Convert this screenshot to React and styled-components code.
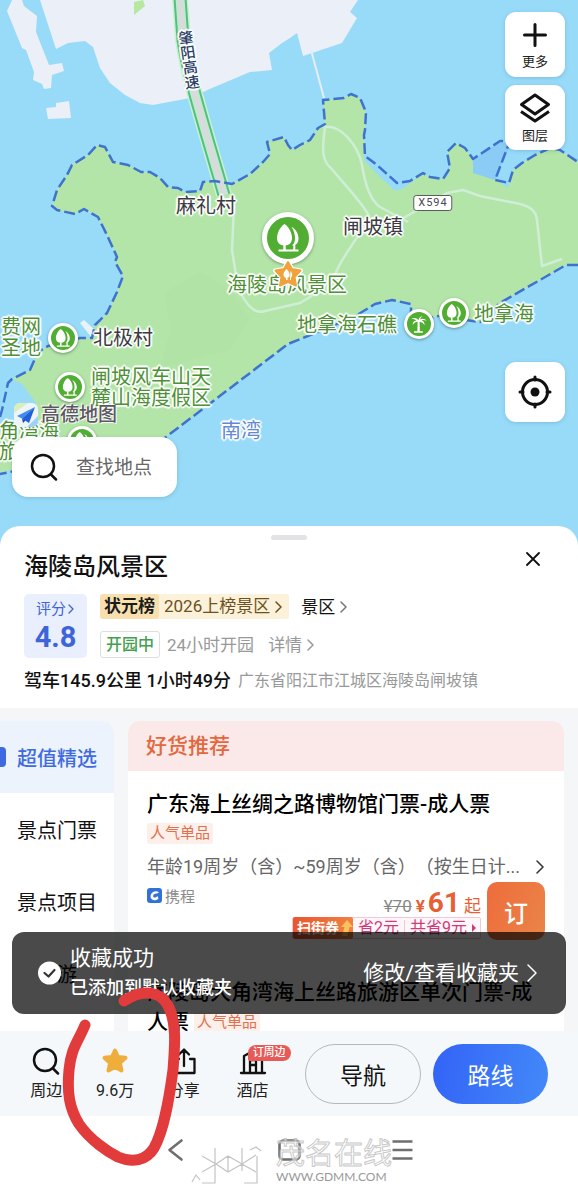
import React from "react";
import styled, { createGlobalStyle, css } from "styled-components";

const GlobalStyle = createGlobalStyle`
  * { box-sizing: border-box; }
  body {
    margin: 0;
    background: #fff;
    font-family: Roboto, "Noto Sans CJK SC", sans-serif;
    text-spacing-trim: space-all;
    color: #111;
  }
  button, input { font: inherit; color: inherit; border: 0; padding: 0; background: none; }
  h1, h2, h3, p { margin: 0; font-weight: 400; }
  a { color: inherit; text-decoration: none; }
  svg { display: block; flex: none; }
`;

const Page = styled.div`
  position: relative;
  display: flex;
  flex-direction: column;
  width: 100%;
  overflow: hidden;
`;

/* ---------- map ---------- */

const MapArea = styled.section`
  position: relative;
  height: 546px;
  background: #97dbf9;
  overflow: hidden;
`;

const MapSvg = styled.svg`
  width: 100%;
  height: 100%;
`;

const place = css`
  position: absolute;
  left: ${(p) => (p.$x / 578) * 100}%;
  top: ${(p) => p.$y}px;
  transform: translate(-50%, -50%);
`;

const MapLabel = styled.span`
  ${place}
  font-size: 20px;
  line-height: 21px;
  white-space: pre;
  color: ${(p) => p.$color || "#3c3a42"};
  text-shadow: -2px 0 1px #fff, 2px 0 1px #fff, 0 -2px 1px #fff, 0 2px 1px #fff,
    1px 1px 1px #fff, -1px -1px 1px #fff, 1px -1px 1px #fff, -1px 1px 1px #fff;
`;

const RoadName = styled(MapLabel)`
  writing-mode: vertical-rl;
  font-size: 15px;
  font-weight: 500;
  color: #2c3f66;
  transform: translate(-50%, -50%) rotate(-8deg);
`;

const RoadShield = styled.span`
  ${place}
  padding: 0 4px;
  border: 1px solid #5d5a62;
  border-radius: 3px;
  background: #fff;
  font-size: 11px;
  line-height: 14px;
  letter-spacing: 1px;
  color: #4a4a50;
`;

const Pin = styled.span`
  ${place}
  display: flex;
  align-items: center;
  justify-content: center;
  width: ${(p) => p.$d || 30}px;
  height: ${(p) => p.$d || 30}px;
  border: ${(p) => (p.$d ? 5 : 3)}px solid #fff;
  border-radius: 50%;
  background: #52ad33;
  box-shadow: 0 1px 3px rgba(40, 70, 40, 0.5);
`;

const StarPin = styled.span`
  ${place}
`;

const Brand = styled.div`
  position: absolute;
  left: 14px;
  top: 403px;
  display: flex;
  align-items: center;
  gap: 3px;
  font-size: 19px;
  line-height: 24px;
  font-weight: 500;
  color: #5b5660;
  text-shadow: 0 0 1px #fff, 1px 1px 1px #fff, -1px -1px 1px #fff;
`;

const MapTools = styled.div`
  position: absolute;
  top: 12px;
  right: 13px;
  display: flex;
  flex-direction: column;
  gap: 8px;
`;

const ToolButton = styled.button`
  display: flex;
  flex-direction: column;
  align-items: center;
  justify-content: center;
  gap: 4px;
  width: 60px;
  height: ${(p) => (p.$square ? 60 : 65)}px;
  margin-top: ${(p) => (p.$square ? 204 : 0)}px;
  padding-top: ${(p) => (p.$square ? 0 : 2)}px;
  border-radius: 11px;
  background: #fff;
  box-shadow: 0 1px 4px rgba(0, 60, 100, 0.18);
  font-size: 13px;
  line-height: 18px;
  color: #222;
`;

const SearchBox = styled.label`
  position: absolute;
  left: 12px;
  top: 437px;
  display: flex;
  align-items: center;
  gap: 18px;
  width: 165px;
  height: 60px;
  padding-left: 18px;
  border-radius: 16px;
  background: #fff;
  box-shadow: 0 1px 4px rgba(0, 60, 100, 0.18);

  input {
    width: 90px;
    font-size: 19px;
    outline: none;
  }
  input::placeholder { color: #666; opacity: 1; }
`;

/* ---------- place sheet ---------- */

const Sheet = styled.section`
  position: relative;
  display: flex;
  flex-direction: column;
  margin-top: -20px;
  padding: 9px 24px 14px;
  border-radius: 20px 20px 0 0;
  background: #fff;
`;

const Handle = styled.span`
  align-self: center;
  width: 36px;
  height: 5px;
  border-radius: 3px;
  background: #e3e3e5;
`;

const TitleRow = styled.div`
  display: flex;
  justify-content: space-between;
  margin-top: 12px;

  h1 { font-size: 24px; line-height: 30px; font-weight: 500; }
`;

const CloseButton = styled.button`
  display: flex;
  align-items: center;
  justify-content: center;
  width: 30px;
  height: 14px;
  margin-right: 6px;
`;

const Facts = styled.div`
  display: flex;
  gap: 13px;
  margin-top: 12px;
`;

const Score = styled.a`
  display: flex;
  flex-direction: column;
  align-items: center;
  width: 63px;
  height: 64px;
  padding-top: 5px;
  border-radius: 5px;
  background: #e9effc;
  color: #3f63d8;
  font-size: 15px;
  line-height: 20px;

  strong { font-size: 29px; line-height: 37px; font-weight: 700; }
`;

const Inline = styled.span`
  display: flex;
  align-items: center;
  gap: ${(p) => p.$gap || 0}px;
`;

const FactRows = styled.div`
  display: flex;
  flex-direction: column;
  justify-content: space-between;
`;

const FactRow = styled.div`
  display: flex;
  align-items: center;
  gap: ${(p) => p.$gap}px;
  font-size: 17px;
  line-height: 24px;
`;

const RankLink = styled.a`
  display: flex;
  align-items: center;
  padding-right: 6px;
  border-radius: 3px;
  background: #fcf1d9;
  color: #6c5223;
  font-size: 17px;
  line-height: 25px;
  gap: 5px;

  b {
    padding: 0 4px;
    border-radius: 3px;
    background: #f7e0ae;
    color: #1b1b1b;
    font-size: 17px;
    font-weight: 700;
  }
`;

const OpenTag = styled.span`
  padding: 0 5px;
  border: 1px solid #dcdfdc;
  border-radius: 3px;
  color: #43a04f;
  font-size: 16px;
  line-height: 25px;
  font-weight: 500;
`;

const Hours = styled.span`
  display: flex;
  align-items: center;
  gap: 14px;
  color: #999;
`;

const TripRow = styled.p`
  display: flex;
  align-items: center;
  gap: 7px;
  margin-top: 10px;
  line-height: 26px;
  white-space: nowrap;
  font-size: 16px;
  color: #999;

  strong { font-size: 18px; font-weight: 500; color: #111; }
`;

/* ---------- offers ---------- */

const Offers = styled.section`
  display: flex;
  align-items: stretch;
  gap: 14px;
  padding: 13px 14px 0 0;
  background: #f5f6f7;
`;

const SideNav = styled.nav`
  display: flex;
  flex-direction: column;
  flex: none;
  width: 114px;
  border-radius: 0 12px 0 0;
  background: #fff;
  overflow: hidden;
`;

const SideLink = styled.a`
  position: relative;
  display: flex;
  align-items: center;
  justify-content: center;
  height: 72px;
  padding-left: ${(p) => (p.$indent ? 20 : 0)}px;
  background: ${(p) => (p.$active ? "#edf3fd" : "transparent")};
  color: ${(p) => (p.$active ? "#3f6be0" : "#111")};
  font-size: 20px;
  font-weight: ${(p) => (p.$active ? 500 : 400)};

  &::before {
    content: "";
    display: ${(p) => (p.$active ? "block" : "none")};
    position: absolute;
    left: 0;
    width: 6px;
    height: 20px;
    border-radius: 0 4px 4px 0;
    background: #3f69e0;
  }
`;

const Card = styled.div`
  flex: 1;
  min-width: 0;
  border-radius: 12px 12px 0 0;
  background: #fff;
  overflow: hidden;
`;

const CardHead = styled.h2`
  padding-left: 18px;
  background: #fbe8e8;
  color: #e2683f;
  font-size: 21px;
  line-height: 50px;
  font-weight: 500;
`;

const Offer = styled.article`
  padding: ${(p) => (p.$next ? 37 : 18)}px 19px 0;
`;

const OfferTitle = styled.h3`
  font-size: 21px;
  line-height: 30px;
  font-weight: 500;
  color: #000;
`;

const Tag = styled.span`
  display: inline-block;
  padding: 0 3px;
  border-radius: 3px;
  background: #fdefea;
  color: #e0714f;
  font-size: 15px;
  line-height: 21px;
  font-weight: 400;
  vertical-align: ${(p) => (p.$inline ? "2px" : "top")};
  margin: ${(p) => (p.$inline ? "0 0 0 5px" : "4px 0 0")};
`;

const Terms = styled.a`
  display: flex;
  align-items: center;
  justify-content: space-between;
  margin-top: 10px;
  font-size: 18px;
  line-height: 26px;
  white-space: nowrap;
  color: #666;
`;

const BuyRow = styled.div`
  display: flex;
  justify-content: space-between;
  margin-top: 2px;
`;

const Vendor = styled.span`
  display: flex;
  align-items: center;
  gap: 3px;
  height: 26px;
  font-size: 15px;
  color: #8a8a8a;
`;

const PriceBlock = styled.div`
  display: flex;
  flex-direction: column;
  align-items: flex-end;
  padding-top: 6px;
`;

const Price = styled.p`
  display: flex;
  align-items: baseline;
  height: 29px;
  line-height: 29px;
  font-size: 17px;
  color: #e65f35;

  del { color: #888; margin-right: 4px; }
  b { font-weight: 700; }
  strong { margin: 0 4px 0 3px; font-size: 28px; font-weight: 700; }
`;

const Coupon = styled.span`
  display: flex;
  align-items: center;
  gap: 5px;
  height: 22px;
  padding-right: 4px;
  border: 1px solid #f0c9d8;
  border-radius: 2px;
  background: #fff6fa;
  color: #cf3a78;
  font-size: 16px;
  line-height: 20px;

  b {
    display: flex;
    align-items: center;
    height: 22px;
    padding-left: 4px;
    border-radius: 2px;
    background: linear-gradient(90deg, #e9562f, #f08143);
    color: #fff;
    font-size: 14px;
    font-weight: 700;
  }
  i { width: 1px; height: 16px; background: #f0c9d8; }
`;

const BookButton = styled.button`
  width: 58px;
  height: 58px;
  margin-left: 6px;
  border-radius: 10px;
  background: linear-gradient(110deg, #ee6c3c, #ea8547);
  color: #fff;
  font-size: 24px;
  font-weight: 500;
`;

const Buy = styled.div`
  display: flex;
`;

/* ---------- toast ---------- */

const Toast = styled.div`
  position: absolute;
  left: 12px;
  right: 12px;
  top: 932px;
  display: flex;
  align-items: center;
  justify-content: space-between;
  height: 82px;
  padding: 0 28px 0 26px;
  border-radius: 12px;
  background: rgba(0, 0, 0, 0.71);
  color: #fff;
  font-size: 21px;
  line-height: 30px;
  white-space: nowrap;
`;

const ToastText = styled.div`
  display: flex;
  flex-direction: column;

  strong { font-size: 18px; font-weight: 500; }
`;

const ToastLink = styled.a`
  display: flex;
  align-items: center;
  gap: 8px;
`;

/* ---------- bottom bar ---------- */

const BottomBar = styled.footer`
  position: relative;
  display: flex;
  align-items: flex-start;
  gap: 12px;
  height: 85px;
  margin-top: -6px;
  padding: 13px 30px 0 12px;
  background: #f5f8fa;
`;

const Tabs = styled.nav`
  display: flex;
  flex: 1;
  margin-right: 6px;
`;

const TabButton = styled.button`
  position: relative;
  display: flex;
  flex: 1;
  flex-direction: column;
  align-items: center;
  font-size: 16px;
  line-height: 22px;
  color: #222;

  svg { margin: 3px 0 5px; }
`;

const Badge = styled.em`
  position: absolute;
  left: 50%;
  top: 1px;
  margin-left: -5px;
  padding: 0 5px;
  border-radius: 8px 8px 8px 2px;
  background: #e65a58;
  color: #fff;
  font-size: 11px;
  line-height: 16px;
  font-style: normal;
  font-weight: 500;
  white-space: nowrap;
`;

const PillButton = styled.button`
  width: ${(p) => (p.$primary ? 115 : 116)}px;
  height: 60px;
  border-radius: 30px;
  font-size: 23px;
  ${(p) =>
    p.$primary
      ? css`
          background: linear-gradient(100deg, #3363f7, #4389f8);
          color: #fff;
        `
      : css`
          border: 1px solid #b4b8bc;
        `}
`;

const SystemBar = styled.div`
  display: flex;
  justify-content: center;
  gap: 90px;
  height: 71px;
  padding-top: 22px;
  background: #fff;

  button { width: 23px; height: 24px; }
`;

const Watermark = styled.div`
  position: absolute;
  left: 190px;
  top: 1138px;
  display: flex;
  align-items: flex-end;
  gap: 14px;
  pointer-events: none;
`;

const WatermarkText = styled.div`
  display: flex;
  flex-direction: column;
  color: rgba(255, 255, 255, 0.55);
  -webkit-text-stroke: 1px rgba(185, 185, 185, 0.8);

  b { font-size: 29px; line-height: 31px; font-weight: 400; }
  span {
    font-family: Lato, sans-serif;
    font-size: 12px;
    line-height: 14px;
    color: #999;
    -webkit-text-stroke: 0;
  }
`;

const Marker = styled.svg`
  position: absolute;
  left: 60px;
  top: 980px;
  pointer-events: none;
`;

/* ---------- icons ---------- */

const Trees = ({ size = 22 }) => (
  <svg width={size} height={size} viewBox="0 0 34 34" fill="#fff" aria-hidden="true">
    <path d="M13.500 3C9 6 6 12 6 17c0 4.500 2.500 7.500 7.500 7.500S21 21.500 21 17C21 12 18 6 13.500 3z" />
    <path d="M20.500 6c4.500 2 7 6.500 7 11.500 0 4-1.800 6.800-6.500 7 2.300-2 3-4.500 3-7.500 0-4-1.300-8-3.500-11z" />
    <path d="M12.300 24h2.400v5h-2.400zM22.300 23.500h2v5.500h-2zM7.500 28.500h20v2h-20z" />
  </svg>
);

const Palm = () => (
  <svg width="22" height="22" viewBox="0 0 20 20" fill="#fff" aria-hidden="true">
    <path d="M9.500 6.500C8 4.500 5.500 4 3 5.500c2-.2 3.500.3 4.500 1.300C5.500 7 4.300 8.500 4.200 11c1-1.800 2.500-2.800 4.600-3L8.500 16.500H5.500V18h8v-1.500h-2.700L10.500 8c2 .3 3.700 1.300 4.500 3.200.2-2.300-.8-3.700-2.500-4.500 1.300-.5 2.700-.3 4.500.4-1.500-2-4-2.500-5.800-1.300C11.200 4.500 12 3.500 13.500 3 11.500 2.800 10 4 9.500 6.500z" />
  </svg>
);

const Star = ({ size, fill }) => (
  <svg width={size} height={size} viewBox="0 0 28 28" aria-hidden="true">
    <path
      d="M14 3.500 17 10 24.500 10.800 18.800 16 20.500 23.500 14 20 7.500 23.500 9.200 16 3.500 10.800 11 10Z"
      fill={fill}
      stroke={fill}
      strokeWidth="4"
      strokeLinejoin="round"
    />
  </svg>
);

const Chevron = ({ size = 12, color = "currentColor", width = 1.5 }) => (
  <svg width={size / 2 + 2} height={size} viewBox={`0 0 ${size / 2 + 2} ${size}`} fill="none" stroke={color} strokeWidth={width} strokeLinecap="round" strokeLinejoin="round" aria-hidden="true">
    <path d={`M1 1 L${size / 2} ${size / 2} L1 ${size - 1}`} />
  </svg>
);

const SearchIcon = () => (
  <svg width="28" height="28" viewBox="0 0 28 28" fill="none" stroke="#111" strokeWidth="2.500" strokeLinecap="round" aria-hidden="true">
    <circle cx="13" cy="13" r="11" />
    <path d="M21 21.500 26 26.500" />
  </svg>
);

const coast =
  "M0 417 2 410 8 383 12 379 30 370 38 352 48 346 80 338 92 338 95 325 107 313 117 292 123 276 115 262 117 257 107 235 98 217 84 209 75 214 57 210 52 206 57 190 67 175 72 165 88 155 97 145 105 147 113 162 128 165 141 172 150 172 160 178 168 187 178 188 185 192 200 191 203 182 215 181 232 184 250 174 263 162 270 154 267 142 284 137 288 145 292 150 300 145 310 140 318 128 325 124 323 100 344 98 351 94 360 98 366 112 365 130 364 135 365 156 377 165 397 183 410 181 423 173 430 177 443 179 450 168 447 152 456 143 465 148 473 159 500 141 510 141 495 180 509 183 513 170 522 163 535 155 550 148 560 150 578 162";
const southCoast =
  "M578 265 566 265 500 303 480 322 466 320 454 313 434 317 411 325 411 304 392 300 375 304 357 315 330 327 288 344 166 437 150 446 60 462 0 474";

const MapDrawing = () => (
  <MapSvg viewBox="0 0 578 546" preserveAspectRatio="none" aria-hidden="true">
    <path fill="#ebeff7" d="M40 0 56 49 68 43 85 41 93 47 100 68 110 83 125 95 140 103 153 105 190 98 212 88 250 72 272 70 269 53 282 43 290 38 297 33 303 56 342 43 357 18 350 12 358 0Z" />
    <path fill="#ebeff7" d="M12 0 7 11 22 48 26 50 34 72 33 80 42 84 44 89 51 88 52 75 64 71 62 63 49 65 36 32 37 16 24 6 22 0Z" />
    <path fill="#ebeff7" d="M46 108 56 107 56 103 69 101 71 118 48 119Z" />
    <path fill="#b6e8a2" d="M134 2 143 0 145 6 134 15Z" />
    <path d="M311 50 324 98" stroke="#e4eef7" strokeWidth="2" />
    <path
      fill="#b3e5a8"
      d="M0 432 20 420 38 410 36 403 22 384 12 379 30 370 38 352 48 346 80 338 92 338 95 325 107 313 117 292 123 276 115 262 117 257 107 235 98 217 84 209 75 214 57 210 52 206 57 190 67 175 72 165 88 155 97 145 105 147 113 162 128 165 141 172 150 172 160 178 168 187 178 188 185 192 200 191 203 182 215 181 232 184 250 174 263 162 270 154 267 142 284 137 288 145 292 150 300 145 310 140 318 128 325 124 323 100 344 98 351 94 360 98 366 112 365 130 364 160 377 174 395 191 404 188 413 181 423 173 430 177 443 179 450 168 447 152 456 143 465 148 473 159 473 173 493 178 508 188 513 170 522 163 535 155 550 148 560 150 578 162V265L566 265 500 303 480 322 466 320 454 313 434 317 411 325 411 304 392 300 375 304 357 315 330 327 288 344 166 437 150 446 60 462 0 472Z"
    />
    <path fill="#8accf5" d="M473 160 500 141 510 145 495 180 473 173Z" />
    <path fill="#ace09f" opacity=".25" d="M165 292 200 272 230 290 250 318 230 350 160 368 170 330Z" />
    <path fill="#e8f2f7" d="M80 323 84 320 95 330 92 338Z" />
    <g fill="none" stroke="#cfeed6" strokeWidth="2.500" strokeLinejoin="round">
      <path d="M325 127C340 124 358 145 362 165 365 185 370 200 380 207L408 222" />
      <path d="M325 127C322 150 322 160 330 167 345 185 364 205 369 216 C355 245 342 255 335 275" />
      <path d="M234 205 232 250 238 288C246 304 254 315 265 311L300 303C315 295 320 290 335 275" />
      <path d="M400 220 447 193 463 190 480 196 520 204C532 207 536 212 537 220L542 266 562 259" />
    </g>
    <g fill="none">
      <path d="M180-2 183 40C188 75 200 112 224 195" stroke="#c5f3cf" strokeWidth="16" />
      <path d="M180-2 183 40C188 75 200 112 224 195" stroke="#58bd82" strokeWidth="13" />
      <path d="M180-2 183 40C188 75 200 112 224 195" stroke="#b7efc8" strokeWidth="9" />
      <path d="M180-2 183 40C188 75 200 112 224 195" stroke="#d9dadc" strokeWidth="6" />
    </g>
    <g fill="none" stroke="#3f72cf" strokeWidth="2.500" strokeDasharray="11 4" strokeLinejoin="round">
      <path d={coast} />
      <path d={southCoast} />
    </g>
  </MapSvg>
);

const green = "#4d9036";

export default function App() {
  return (
    <>
      <GlobalStyle />
      <Page>
        <MapArea>
          <MapDrawing />
          <RoadName $x={187} $y={60}>肇阳高速</RoadName>
          <RoadShield $x={433} $y={203}>X594</RoadShield>
          <MapLabel $x={206} $y={206}>麻礼村</MapLabel>
          <MapLabel $x={373} $y={227}>闸坡镇</MapLabel>
          <MapLabel $x={123} $y={338}>北极村</MapLabel>
          <MapLabel $x={287} $y={285} $color={green}>海陵岛风景区</MapLabel>
          <MapLabel $x={347} $y={325} $color={green}>地拿海石礁</MapLabel>
          <MapLabel $x={504} $y={314} $color={green}>地拿海</MapLabel>
          <MapLabel $x={151} $y={388} $color={green}>{"闸坡风车山天\n麓山海度假区"}</MapLabel>
          <MapLabel $x={21} $y={338} $color={green}>{"费网\n圣地"}</MapLabel>
          <MapLabel $x={29} $y={442} $color={green}>{"角湾海\n旅"}</MapLabel>
          <MapLabel $x={241} $y={431} $color="#6389d3">南湾</MapLabel>
          <Pin $x={63} $y={338}><Trees /></Pin>
          <Pin $x={70} $y={387}><Trees /></Pin>
          <Pin $x={82} $y={441}><Trees /></Pin>
          <Pin $x={454} $y={313}><Trees /></Pin>
          <Pin $x={419} $y={324}><Palm /></Pin>
          <Pin $x={288} $y={238} $d={52}><Trees size={34} /></Pin>
          <StarPin $x={288} $y={274}>
            <svg width="32" height="32" viewBox="0 0 32 32" aria-hidden="true">
              <path d="M16 3 20 11 29 12.500 22.500 19 24 28 16 24 8 28 9.500 19 3 12.500 12 11Z" fill="#f0a23c" stroke="#fff" strokeWidth="4" strokeLinejoin="round" />
              <path d="M16 4 20 11 28.500 12.500 22.500 19 24 27.500 16 24 8 27.500 9.500 19 3.500 12.500 12 11Z" fill="#f0a23c" stroke="#f0a23c" strokeWidth="2" strokeLinejoin="round" />
              <path d="M14.500 11c-2 2-3 4-3 6 0 1.500 1 2.500 2.500 2.700V22h1.500v-2.300c1.500-.2 2.200-1.200 2.200-2.700 0-2-1.200-4-3.200-6zM18.500 13c2.500 3 2 5.500.5 6.500V22h-1" fill="#fff" />
            </svg>
          </StarPin>
          <Brand>
            <svg width="24" height="24" viewBox="0 0 24 24" aria-hidden="true">
              <rect width="24" height="24" rx="6" fill="#eef5f8" />
              <path d="M0 10V6a6 6 0 0 1 6-6h8L0 10z" fill="#d8eebd" />
              <path d="M13 24 24 13v5a6 6 0 0 1-6 6z" fill="#9fd0fa" />
              <path d="M21 4 3 13l5 2.500z" fill="#3f8cf0" />
              <path d="M21 4 8 15.500 15 20z" fill="#1f5fd8" />
              <path d="M8 15.500 9 20l2.500-2.500z" fill="#174bb0" />
            </svg>
            高德地图
          </Brand>
          <MapTools>
            <ToolButton>
              <svg width="28" height="28" viewBox="0 0 28 28" stroke="#111" strokeWidth="3" strokeLinecap="round" aria-hidden="true">
                <path d="M14 3.500v21M3.500 14h21" />
              </svg>
              更多
            </ToolButton>
            <ToolButton>
              <svg width="32" height="30" viewBox="0 0 32 30" fill="none" stroke="#111" strokeWidth="3" strokeLinejoin="round" aria-hidden="true">
                <path d="M16 2 29.500 11.500 16 21 2.500 11.500Z" />
                <path d="M2 18.500 16 28 30 18.500" />
              </svg>
              图层
            </ToolButton>
            <ToolButton $square aria-label="定位">
              <svg width="34" height="34" viewBox="0 0 34 34" fill="none" stroke="#111" strokeWidth="3" aria-hidden="true">
                <circle cx="17" cy="17" r="12.500" />
                <circle cx="17" cy="17" r="4.500" fill="#111" stroke="none" />
                <path d="M17 2v3M17 29v3M2 17h3M29 17h3" strokeLinecap="round" />
              </svg>
            </ToolButton>
          </MapTools>
          <SearchBox>
            <SearchIcon />
            <input placeholder="查找地点" aria-label="查找地点" />
          </SearchBox>
        </MapArea>

        <Sheet>
          <Handle />
          <TitleRow>
            <h1>海陵岛风景区</h1>
            <CloseButton aria-label="关闭">
              <svg width="14" height="14" viewBox="0 0 14 14" stroke="#111" strokeWidth="1.800" strokeLinecap="round" aria-hidden="true">
                <path d="M1 1 13 13M13 1 1 13" />
              </svg>
            </CloseButton>
          </TitleRow>
          <Facts>
            <Score href="#score">
              <Inline $gap={2}>评分<Chevron size={10} width={1.300} /></Inline>
              <strong>4.8</strong>
            </Score>
            <FactRows>
              <FactRow $gap={12}>
                <RankLink href="#rank">
                  <b>状元榜</b>
                  2026上榜景区
                  <Chevron />
                </RankLink>
                <Inline $gap={5}>景区<Chevron color="#777" /></Inline>
              </FactRow>
              <FactRow $gap={7}>
                <OpenTag>开园中</OpenTag>
                <Hours>
                  24小时开园
                  <Inline $gap={5}>详情<Chevron color="#999" /></Inline>
                </Hours>
              </FactRow>
            </FactRows>
          </Facts>
          <TripRow>
            <strong>驾车145.9公里 1小时49分</strong>
            广东省阳江市江城区海陵岛闸坡镇
          </TripRow>
        </Sheet>

        <Offers>
          <SideNav>
            <SideLink href="#best" $active>超值精选</SideLink>
            <SideLink href="#tickets">景点门票</SideLink>
            <SideLink href="#items">景点项目</SideLink>
            <SideLink href="#tours" $indent>游</SideLink>
          </SideNav>
          <Card>
            <CardHead>好货推荐</CardHead>
            <Offer>
              <OfferTitle>广东海上丝绸之路博物馆门票-成人票</OfferTitle>
              <Tag>人气单品</Tag>
              <Terms href="#terms">
                年龄19周岁（含）~59周岁（含）（按生日计...
                <Chevron size={14} color="#333" />
              </Terms>
              <BuyRow>
                <Vendor>
                  <svg width="15" height="15" viewBox="0 0 15 15" aria-hidden="true">
                    <rect width="15" height="15" rx="3" fill="#3272d6" />
                    <path d="M12 4.500C10 2.500 7.500 3 5.500 4.500 3 6.500 3 10 5 11.500c2 1.300 5 1 6.500-1l-1-2.500C9 9.500 7.500 10 6.500 9c-.8-1-.2-2.300 1-3 1.500-.7 2.500 0 4.500-1.500z" fill="#fff" />
                  </svg>
                  携程
                </Vendor>
                <Buy>
                  <PriceBlock>
                    <Price>
                      <del>¥70</del>
                      <b>¥</b>
                      <strong>61</strong>起
                    </Price>
                    <Coupon>
                      <b>
                        扫街券
                        <svg width="14" height="20" viewBox="0 0 14 20" aria-hidden="true">
                          <path d="M8 2 14 9h-3.500L8.500 18H3L5.500 9H2z" fill="#fbc15c" />
                        </svg>
                      </b>
                      省2元<i />共省9元
                      <svg width="4" height="8" viewBox="0 0 4 8" fill="currentColor" aria-hidden="true">
                        <path d="M0 0 4 4 0 8z" />
                      </svg>
                    </Coupon>
                  </PriceBlock>
                  <BookButton>订</BookButton>
                </Buy>
              </BuyRow>
            </Offer>
            <Offer $next>
              <OfferTitle>
                海陵岛大角湾海上丝路旅游区单次门票-成人票
                <Tag $inline>人气单品</Tag>
              </OfferTitle>
            </Offer>
          </Card>
        </Offers>

        <BottomBar>
          <Tabs>
            <TabButton>
              <SearchIcon />
              周边
            </TabButton>
            <TabButton>
              <Star size={28} fill="#efae3b" />
              9.6万
            </TabButton>
            <TabButton>
              <svg width="28" height="28" viewBox="0 0 28 28" fill="none" stroke="#111" strokeWidth="2.300" strokeLinecap="round" strokeLinejoin="round" aria-hidden="true">
                <path d="M14 19V3M9 7.500 14 2.500 19 7.500M9 12H3.500V26h21V12H20" />
              </svg>
              分享
            </TabButton>
            <TabButton>
              <svg width="28" height="28" viewBox="0 0 28 28" fill="none" stroke="#111" strokeWidth="2.300" strokeLinecap="round" strokeLinejoin="round" aria-hidden="true">
                <path d="M2 26h24M5 26V9l9-5 9 5V26M11 26V13h6V26M11 18h6" />
              </svg>
              酒店
              <Badge>订周边</Badge>
            </TabButton>
          </Tabs>
          <PillButton>导航</PillButton>
          <PillButton $primary>路线</PillButton>
        </BottomBar>

        <SystemBar>
          <button aria-label="返回">
            <svg width="23" height="24" viewBox="0 0 23 24" fill="none" stroke="#6f6f6f" strokeWidth="2.600" strokeLinecap="round" strokeLinejoin="round" aria-hidden="true">
              <path d="M16.500 2.500 4.500 12 16.500 21.500" />
            </svg>
          </button>
          <button aria-label="主屏幕">
            <svg width="23" height="24" viewBox="0 0 23 24" fill="none" stroke="#6f6f6f" strokeWidth="2.600" aria-hidden="true">
              <rect x="1.500" y="2.500" width="20" height="19" rx="4" />
            </svg>
          </button>
          <button aria-label="最近任务">
            <svg width="23" height="24" viewBox="0 0 23 24" stroke="#6f6f6f" strokeWidth="2.600" aria-hidden="true">
              <path d="M1.500 3.500h20M1.500 12h20M1.500 20.500h20" />
            </svg>
          </button>
        </SystemBar>

        <Toast role="status">
          <Inline $gap={9}>
            <svg width="23" height="24" viewBox="0 0 23 24" fill="none" aria-hidden="true">
              <circle cx="11.500" cy="12" r="11.500" fill="#fff" />
              <path d="M6.500 12 10.500 15.500 16.500 9" stroke="#333" strokeWidth="2.200" strokeLinecap="round" strokeLinejoin="round" />
            </svg>
            <ToastText>
              收藏成功
              <strong>已添加到默认收藏夹</strong>
            </ToastText>
          </Inline>
          <ToastLink href="#favourites">
            修改/查看收藏夹
            <Chevron size={18} />
          </ToastLink>
        </Toast>

        <Watermark>
          <svg width="72" height="46" viewBox="0 0 72 46" fill="none" stroke="#c4c4c4" strokeWidth="1.200" aria-hidden="true">
            <path d="M12 18 26 26 38 34 52 26 66 17M12 34 26 26 38 18 52 26 66 34M25 10V45H12M38 18V34M52 10V33M67 18V45H54M2 44 6 37 10 42M60 12 66 9 71 13" />
          </svg>
          <WatermarkText>
            <b>茂名在线</b>
            <span>WWW.GDMM.COM</span>
          </WatermarkText>
        </Watermark>

        <Marker width="125" height="190" viewBox="60 980 125 190" fill="none" aria-hidden="true">
          <path d="M85 1025C78 1042 71 1048 69 1070 67 1092 69 1108 79 1124 90 1140 108 1152 118 1157 132 1163 146 1161 154 1148 164 1130 169 1100 173 1070 175 1045 177 1020 167 1004 160 992 143 988 124 1001" stroke="#e23b3b" strokeWidth="11" strokeLinecap="round" strokeLinejoin="round" />
        </Marker>
      </Page>
    </>
  );
}
